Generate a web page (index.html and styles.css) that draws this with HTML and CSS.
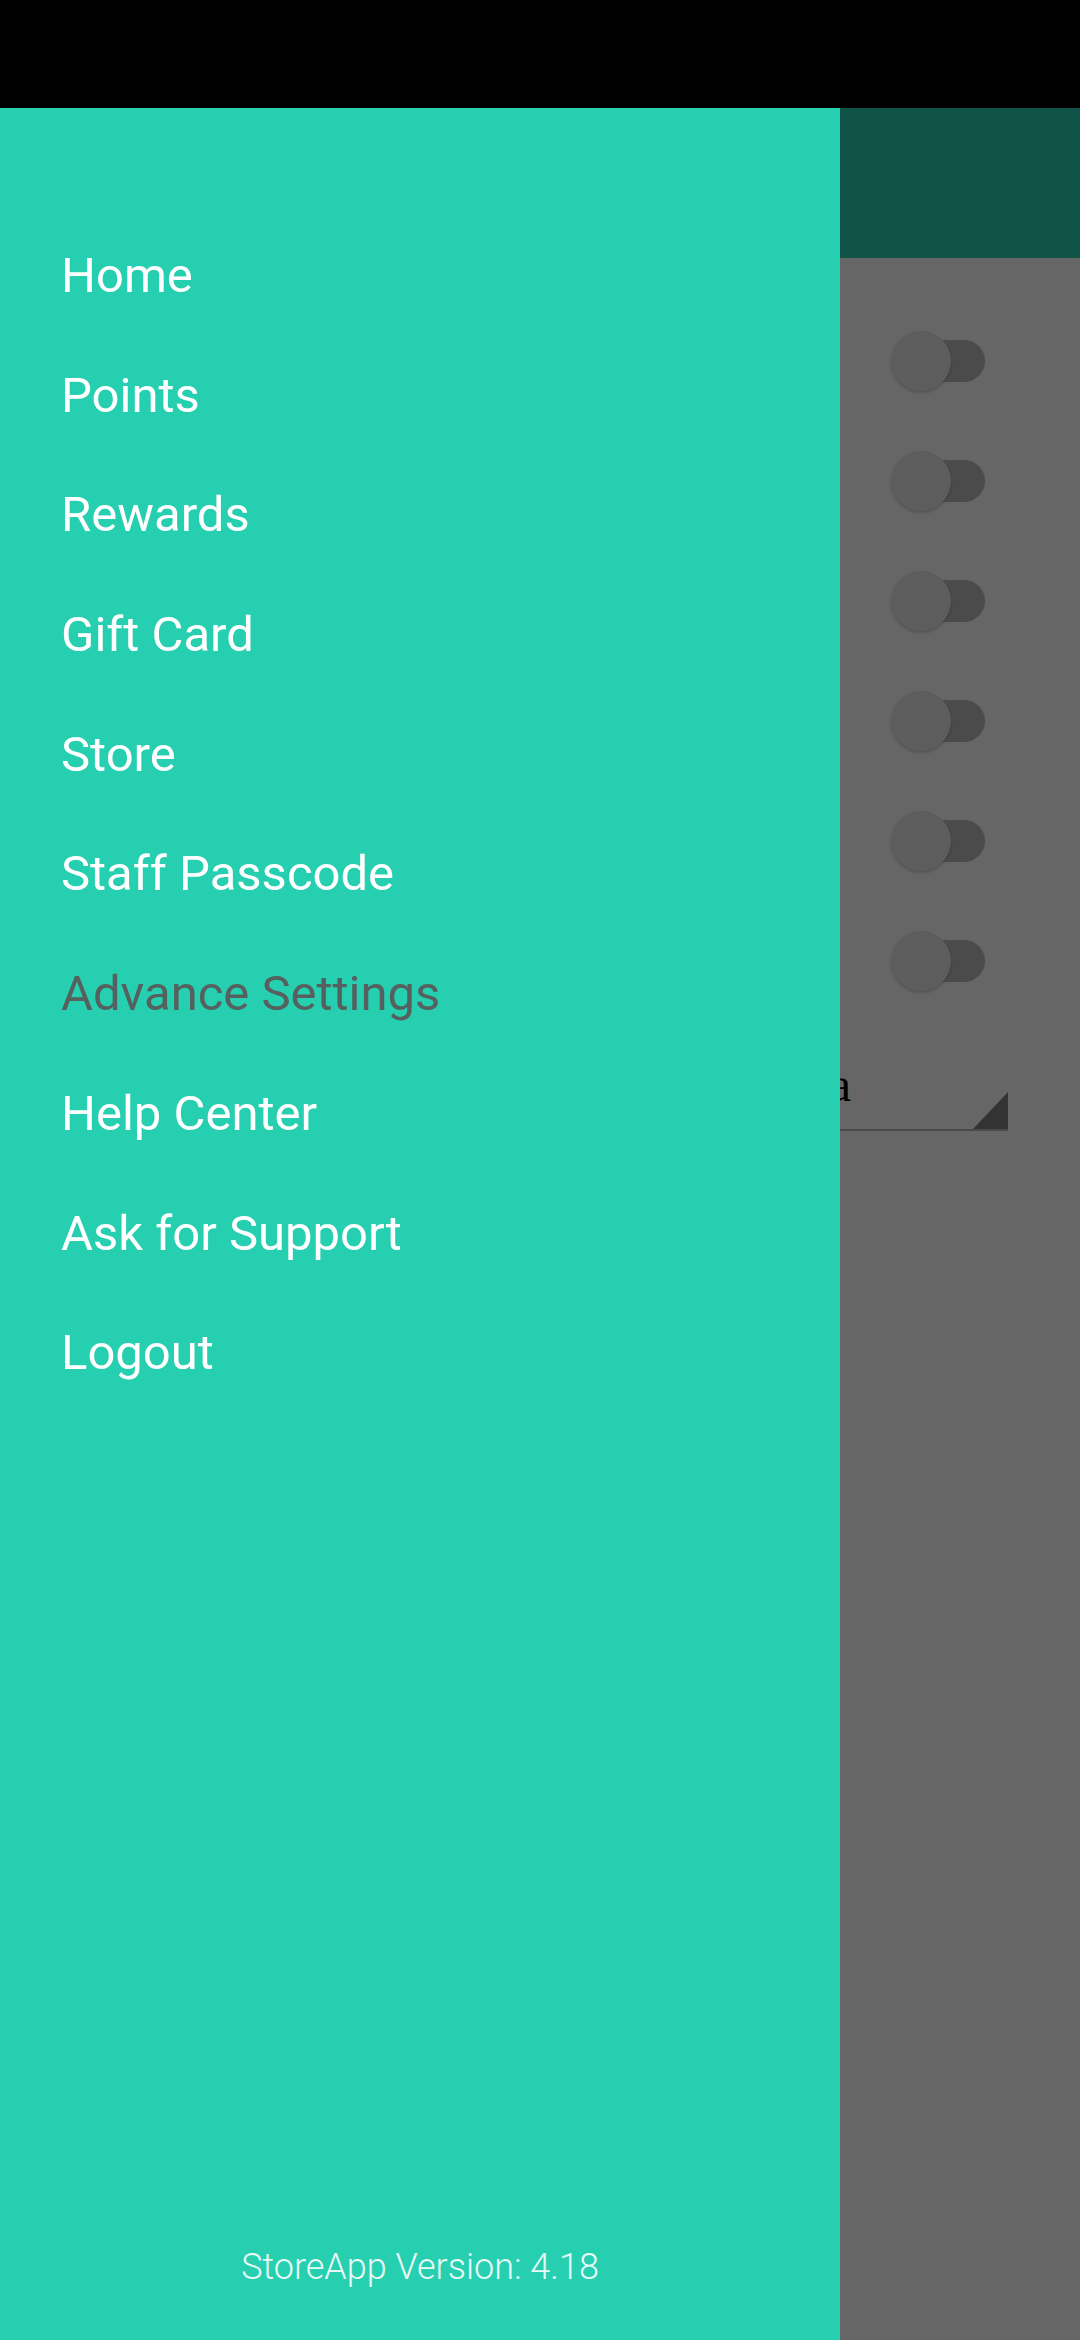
FILE: index.html
```html
<!DOCTYPE html>
<html>
<head>
<meta charset="utf-8">
<link rel="stylesheet" href="styles.css">
</head>
<body>
<div class="screen">
  <div class="statusbar"></div>
  <div class="app">
    <div class="toolbar"></div>
    <div class="content">
      <div class="row"><span class="switch"><span class="track"></span><span class="thumb"></span></span></div>
      <div class="row"><span class="switch"><span class="track"></span><span class="thumb"></span></span></div>
      <div class="row"><span class="switch"><span class="track"></span><span class="thumb"></span></span></div>
      <div class="row"><span class="switch"><span class="track"></span><span class="thumb"></span></span></div>
      <div class="row"><span class="switch"><span class="track"></span><span class="thumb"></span></span></div>
      <div class="row"><span class="switch"><span class="track"></span><span class="thumb"></span></span></div>
      <div class="spinner">
        <span class="spinner-text">Select Printer Area</span>
        <span class="spinner-arrow"></span>
      </div>
    </div>
  </div>
  <nav class="drawer">
    <ul class="menu">
      <li>Home</li>
      <li>Points</li>
      <li>Rewards</li>
      <li>Gift Card</li>
      <li>Store</li>
      <li>Staff Passcode</li>
      <li class="active">Advance Settings</li>
      <li>Help Center</li>
      <li>Ask for Support</li>
      <li>Logout</li>
    </ul>
    <div class="version">StoreApp Version: 4.18</div>
  </nav>
</div>
</body>
</html>
```
FILE: styles.css
```css
html, body {
  margin: 0;
  padding: 0;
}
body {
  width: 1080px;
  height: 2340px;
  overflow: hidden;
  background: #666666;
  font-family: Roboto, "Noto Sans", sans-serif;
}
.screen {
  position: relative;
  width: 1080px;
  height: 2340px;
  display: flex;
  flex-direction: column;
}
.statusbar {
  height: 108px;
  background: #000000;
  flex: none;
}
.app {
  flex: 1;
  display: flex;
  flex-direction: column;
}
.toolbar {
  height: 150px;
  background: #0f5446;
  flex: none;
}
.content {
  flex: 1;
  background: #666666;
  padding-top: 43px;
  display: flex;
  flex-direction: column;
}
.row {
  height: 120px;
  display: flex;
  align-items: center;
  padding-left: 891px;
}
.switch {
  position: relative;
  width: 94px;
  height: 60px;
  display: block;
}
.track {
  position: absolute;
  left: 2px;
  right: 0;
  top: 9px;
  height: 42px;
  border-radius: 21px;
  background: #4b4b4b;
}
.thumb {
  position: absolute;
  left: 0;
  top: 0;
  width: 60px;
  height: 60px;
  border-radius: 50%;
  background: #5d5d5d;
  box-shadow: 0 2px 3px rgba(0, 0, 0, 0.18);
}
.spinner {
  position: relative;
  margin-top: 40px;
  width: 948px;
  margin-left: 60px;
  height: 48px;
  padding-bottom: 20px;
  border-bottom: 2px solid #4a4a4a;
  display: flex;
  align-items: flex-end;
}
.spinner-text {
  width: 791px;
  text-align: right;
  font-family: "Liberation Serif", serif;
  font-size: 48px;
  line-height: 48px;
  color: #000000;
  white-space: nowrap;
}
.spinner-arrow {
  position: absolute;
  right: 0;
  bottom: 0;
  width: 0;
  height: 0;
  border-style: solid;
  border-width: 0 0 37px 35px;
  border-color: transparent transparent #333333 transparent;
}
.drawer {
  position: absolute;
  left: 0;
  top: 108px;
  width: 840px;
  height: 2232px;
  background: #26cfb0;
  display: flex;
  flex-direction: column;
}
.menu {
  list-style: none;
  margin: 0;
  padding: 108px 0 0 0;
  flex: 1;
}
.menu li {
  padding-left: 61px;
  height: 119.7px;
  line-height: 119.7px;
  font-size: 49px;
  color: #ffffff;
  white-space: nowrap;
}
.menu li.active {
  color: #56605e;
}
.version {
  text-align: center;
  font-family: Roboto, sans-serif;
  font-weight: 300;
  font-size: 36px;
  line-height: 50px;
  color: #e8faf6;
  padding-bottom: 48px;
}
```
